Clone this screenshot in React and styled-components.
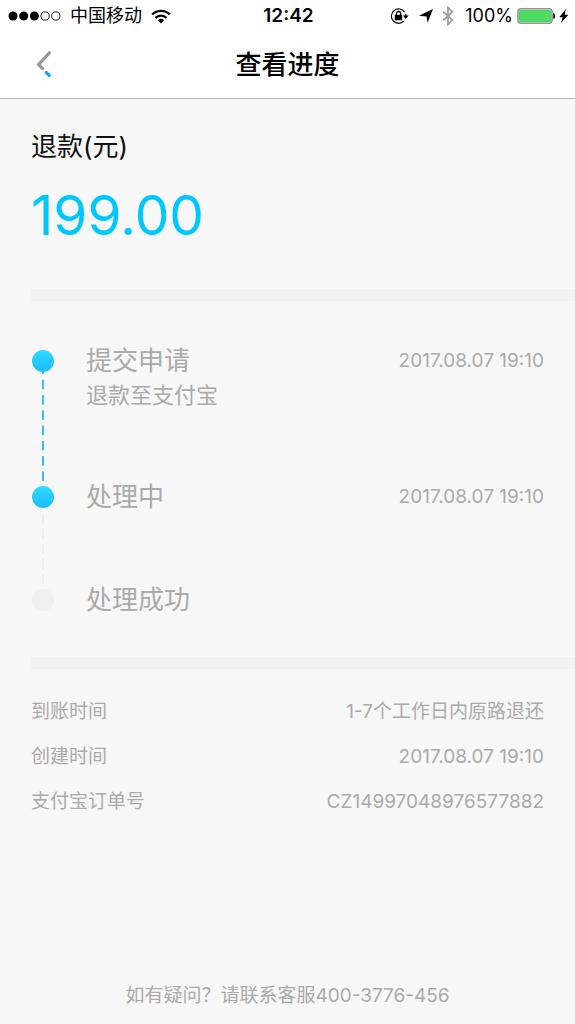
import React from 'react';
import styled, { createGlobalStyle } from 'styled-components';

const STEPS = [
  {
    title: '提交申请',
    note: '退款至支付宝',
    time: '2017.08.07 19:10',
    done: true,
    line: 'active',
  },
  { title: '处理中', time: '2017.08.07 19:10', done: true, line: 'idle' },
  { title: '处理成功', done: false },
];

const DETAILS = [
  { label: '到账时间', value: '1-7个工作日内原路退还' },
  { label: '创建时间', value: '2017.08.07 19:10' },
  { label: '支付宝订单号', value: 'CZ14997048976577882' },
];

const StatusBar = () => {
  return (
    <Status>
      <StatusSide>
        <svg width="53" height="10" viewBox="0 0 53 10">
          {[0, 1, 2].map((i) => (
            <circle key={i} cx={5 + i * 10.7} cy="5" r="4.5" fill="#000" />
          ))}
          {[3, 4].map((i) => (
            <circle
              key={i}
              cx={5 + i * 10.7}
              cy="5"
              r="4.1"
              fill="none"
              stroke="#000"
              strokeWidth="0.9"
            />
          ))}
        </svg>
        <StatusText>中国移动</StatusText>
        <svg width="20" height="15" viewBox="0 0 20 15">
          <g fill="none" stroke="#000" strokeWidth="2.3">
            <path d="M1.2 5.4a12.6 12.6 0 0 1 17.6 0" />
            <path d="M4.5 8.8a7.9 7.9 0 0 1 11 0" />
          </g>
          <path d="M10 14.4l-3.1-3.1a4.5 4.5 0 0 1 6.2 0z" />
        </svg>
      </StatusSide>
      <Clock>12:42</Clock>
      <StatusSide $end>
        <svg width="20" height="16" viewBox="0 0 20 16">
          <path
            d="M14.6 4.1A7.2 7.2 0 1 0 13.8 13.1M15.8 6v2.6"
            fill="none"
            stroke="#000"
            strokeWidth="1.2"
          />
          <path d="M12.9 7.4h5.8l-2.9 3.6z" />
          <rect x="4.8" y="6.8" width="7.4" height="5.4" rx="0.6" />
          <path
            d="M6.4 7.2V5.6a2.1 2.1 0 0 1 4.2 0v1.6"
            fill="none"
            stroke="#000"
            strokeWidth="1.3"
          />
        </svg>
        <svg width="14" height="14" viewBox="0 0 14 14">
          <path d="M14 0L8.6 13.8 7.6 7.4 0 6.8z" />
        </svg>
        <svg width="12" height="20" viewBox="0 0 12 20">
          <path
            d="M1 5.6l9.4 8.4L6 18.6V1.4L10.4 6 1 14.4"
            fill="none"
            stroke="#9b9b9b"
            strokeWidth="1.7"
          />
        </svg>
        <Battery>
          <StatusText>100%</StatusText>
          <svg width="52" height="16" viewBox="0 0 52 16">
            <rect
              x="1"
              y="0.9"
              width="34"
              height="14.2"
              rx="2"
              fill="#fff"
              stroke="#555"
              strokeWidth="1"
            />
            <rect x="2" y="2" width="32" height="12" rx="0.8" fill="#4cd964" />
            <path d="M36.2 5c2.6.4 2.6 5.6 0 6z" />
            <path d="M49 1L42.2 9.2h3.4L44 15l7.4-8.2h-3.8z" />
          </svg>
        </Battery>
      </StatusSide>
    </Status>
  );
};

const App = () => {
  return (
    <Page>
      <GlobalStyle />
      <Header>
        <StatusBar />
        <NavBar>
          <BackButton type="button" aria-label="返回">
            <svg width="16" height="28" viewBox="0 0 16 28">
              <g fill="none" strokeWidth="3.2" strokeLinecap="round">
                <path d="M13.4 1.8L2.6 13.4l4 4.2" stroke="#999" />
                <path d="M10.2 21.4l3 3" stroke="#12a8f5" />
              </g>
            </svg>
          </BackButton>
          <NavTitle>查看进度</NavTitle>
        </NavBar>
      </Header>

      <Summary>
        <SummaryLabel>退款(元)</SummaryLabel>
        <Amount>199.00</Amount>
      </Summary>
      <Divider />

      <Timeline>
        {STEPS.map((step) => (
          <Step key={step.title}>
            <Rail>
              <Dot $done={step.done} />
              {step.line && <Line $active={step.line === 'active'} />}
            </Rail>
            <StepBody $tall={!!step.note} $last={!step.line}>
              <StepTitle>{step.title}</StepTitle>
              {step.note && <StepNote>{step.note}</StepNote>}
            </StepBody>
            {step.time && <StepTime>{step.time}</StepTime>}
          </Step>
        ))}
      </Timeline>
      <Divider />

      <Details>
        {DETAILS.map((item) => (
          <DetailRow key={item.label}>
            <dt>{item.label}</dt>
            <dd>{item.value}</dd>
          </DetailRow>
        ))}
      </Details>

      <Footer>如有疑问？请联系客服400-3776-456</Footer>
    </Page>
  );
};

export default App;

// 390 keeps Inter near regular while the CJK face drops to its DemiLight cut
const GlobalStyle = createGlobalStyle`
  * {
    box-sizing: border-box;
  }
  body {
    margin: 0;
    background: #f7f7f7;
    font-family: Inter, 'Noto Sans CJK SC', sans-serif;
    font-weight: 390;
  }
  svg {
    display: block;
    flex: none;
  }
`;

const Page = styled.div`
  min-height: 100vh;
  display: flex;
  flex-direction: column;
  color: #aaa;
`;

const Header = styled.header`
  background: #fff;
  border-bottom: 1px solid #b8b8b8;
  color: #000;
`;

const Status = styled.div`
  height: 32px;
  padding: 0 6px 0 8px;
  display: grid;
  grid-template-columns: 1fr auto 1fr;
  align-items: center;
  line-height: 24px;
`;

const StatusSide = styled.div`
  display: flex;
  align-items: center;
  gap: 9px;
  justify-content: ${({ $end }) => ($end ? 'flex-end' : 'flex-start')};
`;

const StatusText = styled.span`
  font-size: 18px;
  font-weight: 400;
`;

const Clock = styled.time`
  font-size: 19px;
  font-weight: 600;
`;

const Battery = styled.div`
  display: flex;
  align-items: center;
  gap: 4px;
  margin-left: 2px;
`;

const NavBar = styled.nav`
  height: 66px;
  padding: 0 32px;
  display: grid;
  grid-template-columns: 1fr auto 1fr;
  align-items: center;
`;

const BackButton = styled.button`
  justify-self: start;
  padding: 0 4px;
  border: 0;
  background: none;
  cursor: pointer;
`;

const NavTitle = styled.h1`
  margin: 0;
  font-size: 26px;
  line-height: 36px;
  font-weight: 500;
`;

const Summary = styled.section`
  padding: 30px 31px 40px;
`;

const SummaryLabel = styled.div`
  color: #111;
  font-size: 26px;
  line-height: 36px;
`;

const Amount = styled.div`
  margin-top: 16px;
  color: #00c8ff;
  font-size: 55px;
  line-height: 68px;
`;

const Divider = styled.hr`
  width: calc(100% - 31px);
  height: 12px;
  margin: 0 0 0 31px;
  border: 0;
  background: #f2f2f2;
`;

const Timeline = styled.ol`
  list-style: none;
  margin: 0;
  padding: 42px 31px 39px;
`;

const Step = styled.li`
  display: flex;
`;

const Rail = styled.div`
  width: 24px;
  padding-top: 7px;
  margin-bottom: -7px;
  display: flex;
  flex-direction: column;
  align-items: center;
`;

const Dot = styled.span`
  width: 22px;
  height: 22px;
  flex: none;
  border-radius: 50%;
  background: ${({ $done }) =>
    ($done && 'linear-gradient(180deg, #2fdcff, #1abaff)') || '#f0f0f0'};
`;

const Line = styled.span`
  width: 2px;
  flex: 1;
  margin-bottom: 5px;
  border-top: ${({ $active }) => ($active ? '2px solid #2bb8f0' : 0)};
  background-image: linear-gradient(
    180deg,
    transparent 36%,
    ${({ $active }) => ($active ? '#3abcf2' : '#eeeeee')} 36%
  );
  background-size: 2px 15px;
  background-repeat: no-repeat round;
  background-clip: padding-box;
`;

const StepBody = styled.div`
  flex: 1;
  margin-left: 31px;
  padding-bottom: ${({ $tall, $last }) => ($last && '0') || ($tall && '68px') || '67px'};
`;

const StepTitle = styled.div`
  font-size: 26px;
  line-height: 36px;
`;

const StepNote = styled.div`
  font-size: 22px;
  line-height: 32px;
`;

const StepTime = styled.time`
  font-size: 19px;
  line-height: 36px;
`;

const Details = styled.dl`
  margin: 0;
  padding: 20px 31px 0;
`;

const DetailRow = styled.div`
  display: flex;
  justify-content: space-between;
  font-size: 19px;
  line-height: 45px;

  dd {
    margin: 0;
  }
`;

const Footer = styled.footer`
  margin-top: auto;
  padding: 16px;
  text-align: center;
  font-size: 19px;
  line-height: 24px;
`;
